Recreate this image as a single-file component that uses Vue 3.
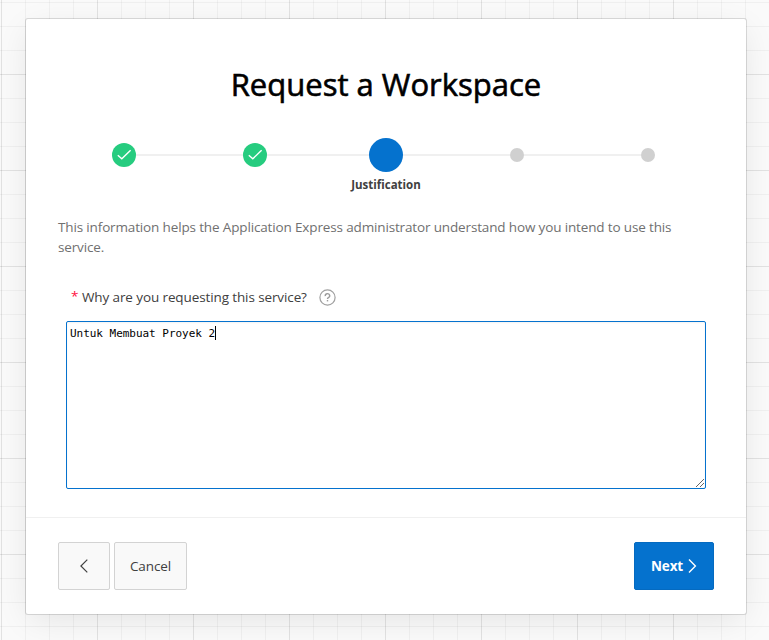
<script setup>
import { ref } from 'vue'

const steps = [
  { state: 'done' },
  { state: 'done' },
  { state: 'active', label: 'Justification' },
  { state: 'todo' },
  { state: 'todo' },
]
const reason = ref('Untuk Membuat Proyek 2')
</script>

<template>
  <div class="page">
    <main class="card">
      <div class="body">
        <h1 class="title"><span>Request a Workspace</span></h1>
        <ol class="steps">
          <li v-for="(step, i) in steps" :key="i" class="step" :class="step.state">
            <div class="track">
              <span class="line" :class="{ hidden: i === 0 }"></span>
              <span class="marker">
                <svg v-if="step.state === 'done'" width="16" height="16" viewBox="0 0 16 16">
                  <path d="M1.8 8.2 5.8 11.8 14.6 3.3" fill="none" stroke="#fff" stroke-width="1.4" />
                </svg>
              </span>
              <span class="line" :class="{ hidden: i === steps.length - 1 }"></span>
            </div>
            <span v-if="step.label" class="label">{{ step.label }}</span>
          </li>
        </ol>
        <p class="intro">
          <span>This information helps the Application Express administrator understand how you intend to use this</span><br />service.
        </p>
        <div class="field-head">
          <span class="required">*</span>
          <span class="question">Why are you requesting this service?</span>
          <svg class="help" width="17" height="17" viewBox="0 0 17 17" fill="none">
            <circle cx="8.5" cy="8.5" r="7.6" stroke="#a0a0a0" stroke-width="1.2" />
            <path d="M6.3 7.1a2.2 2.1 0 1 1 3.1 1.6c-.7.35-.9.6-.9 1.3" stroke="#9c9c9c" stroke-width="1.4" />
            <path d="M7.8 11h1.4v1.4H7.8z" fill="#9c9c9c" />
          </svg>
        </div>
        <div class="textarea" role="textbox">
          <span class="value">{{ reason }}</span><span class="caret"></span>
          <svg class="grip" width="10" height="10" viewBox="0 0 10 10">
            <path d="M1 9 9 1M5 9 9 5" stroke="#666" stroke-width="1" />
          </svg>
        </div>
      </div>
      <footer class="footer">
        <button class="btn back" aria-label="Previous">
          <svg width="8" height="14" viewBox="0 0 8 14">
            <path d="M7.3.6.9 7l6.4 6.4" fill="none" stroke="#404040" stroke-width="1.2" />
          </svg>
        </button>
        <button class="btn cancel"><span>Cancel</span></button>
        <button class="btn next">
          <span>Next</span>
          <svg width="9" height="14" viewBox="0 0 9 14">
            <path d="M1 .6 7.4 7 1 13.4" fill="none" stroke="#fff" stroke-width="1.4" />
          </svg>
        </button>
      </footer>
    </main>
  </div>
</template>

<style>
body {
  margin: 0;
  overflow: hidden;
}
</style>

<style scoped>
* {
  box-sizing: border-box;
}
.page {
  height: 640px;
  padding: 19px 23px 0 26px;
  font-family: "Open Sans", "Noto Sans", sans-serif;
  color: #404040;
  background-color: #fafafa;
  background-image:
    linear-gradient(rgba(0, 0, 0, 0.06) 1px, transparent 1px),
    linear-gradient(90deg, rgba(0, 0, 0, 0.06) 1px, transparent 1px),
    linear-gradient(rgba(0, 0, 0, 0.04) 1px, transparent 1px),
    linear-gradient(90deg, rgba(0, 0, 0, 0.04) 1px, transparent 1px);
  background-size: 96px 96px, 96px 96px, 24px 24px, 24px 24px;
  background-position: 1px 74px, 1px 74px, 1px 2px, 1px 2px;
}
.card {
  width: 720px;
  height: 595px;
  display: flex;
  flex-direction: column;
  background: #fff;
  border-radius: 2px;
  box-shadow: 0 0 0 1px rgba(0, 0, 0, 0.13), 0 8px 32px -4px rgba(0, 0, 0, 0.1);
}
.body {
  height: 498px;
  padding: 45px 32px 0;
}
.title {
  margin: 0;
  height: 40px;
  line-height: 40px;
  text-align: center;
  font-size: 31px;
  font-weight: 400;
  -webkit-text-stroke: 0.6px #000;
  color: #000;
  white-space: nowrap;
}
.steps {
  list-style: none;
  display: grid;
  grid-template-columns: repeat(5, 131px);
  justify-content: center;
  margin: 34px 0 0;
  padding: 0;
  height: 79px;
}
.step {
  display: flex;
  flex-direction: column;
  align-items: center;
}
.track {
  width: 100%;
  height: 34px;
  display: flex;
  align-items: center;
}
.line {
  flex: 1;
  height: 2px;
  background: #f0f0f0;
}
.hidden {
  visibility: hidden;
}
.marker {
  display: flex;
  align-items: center;
  justify-content: center;
  border-radius: 50%;
}
.done .marker {
  width: 24px;
  height: 24px;
  background: #26cc7f;
}
.active .marker {
  width: 34px;
  height: 34px;
  background: #0572ce;
}
.todo .marker {
  width: 14.5px;
  height: 14.5px;
  background: #d0d0d0;
}
.label {
  margin-top: 5px;
  font-size: 11.5px;
  line-height: 16px;
  font-weight: 700;
}
.intro {
  margin: 0;
  font-size: 13.5px;
  line-height: 20px;
  letter-spacing: -0.145px;
  color: #707070;
  white-space: nowrap;
}
.field-head {
  height: 20px;
  margin-top: 30px;
  padding-left: 13px;
  display: flex;
  align-items: center;
  font-size: 13.5px;
  line-height: 20px;
  white-space: nowrap;
}
.question {
  letter-spacing: -0.11px;
}
.required {
  width: 11px;
  padding-bottom: 3px;
  color: #ff0d3d;
}
.help {
  margin-left: 12px;
}
.textarea {
  position: relative;
  width: 640px;
  height: 168px;
  margin: 14px 0 0 8px;
  padding: 4px 3px;
  display: flex;
  border: 1px solid #0572ce;
  border-radius: 2px;
  box-shadow: inset 0 1px 2px rgba(0, 0, 0, 0.05);
  font-family: "DejaVu Sans Mono", monospace;
  font-size: 11px;
  letter-spacing: -0.03px;
  line-height: 15px;
  color: #000;
}
.caret {
  width: 1px;
  height: 14px;
  background: #000;
}
.grip {
  position: absolute;
  right: 0;
  bottom: 0;
}
.footer {
  flex: 1;
  display: flex;
  gap: 4px;
  padding: 24px 32px 0;
  border-top: 1px solid #f0f0f0;
}
.btn {
  height: 48px;
  padding: 0;
  display: flex;
  align-items: center;
  justify-content: center;
  border: 1px solid #d3d3d3;
  border-radius: 2px;
  background: #f9f9f9;
  color: #404040;
  font-family: inherit;
  font-size: 13.5px;
  letter-spacing: -0.1px;
  white-space: nowrap;
}
.back {
  width: 52px;
}
.cancel {
  width: 73px;
}
.next {
  width: 80px;
  margin-left: auto;
  gap: 5px;
  border-color: #056ac0;
  background: #0572ce;
  color: #fff;
  font-weight: 700;
}
</style>
